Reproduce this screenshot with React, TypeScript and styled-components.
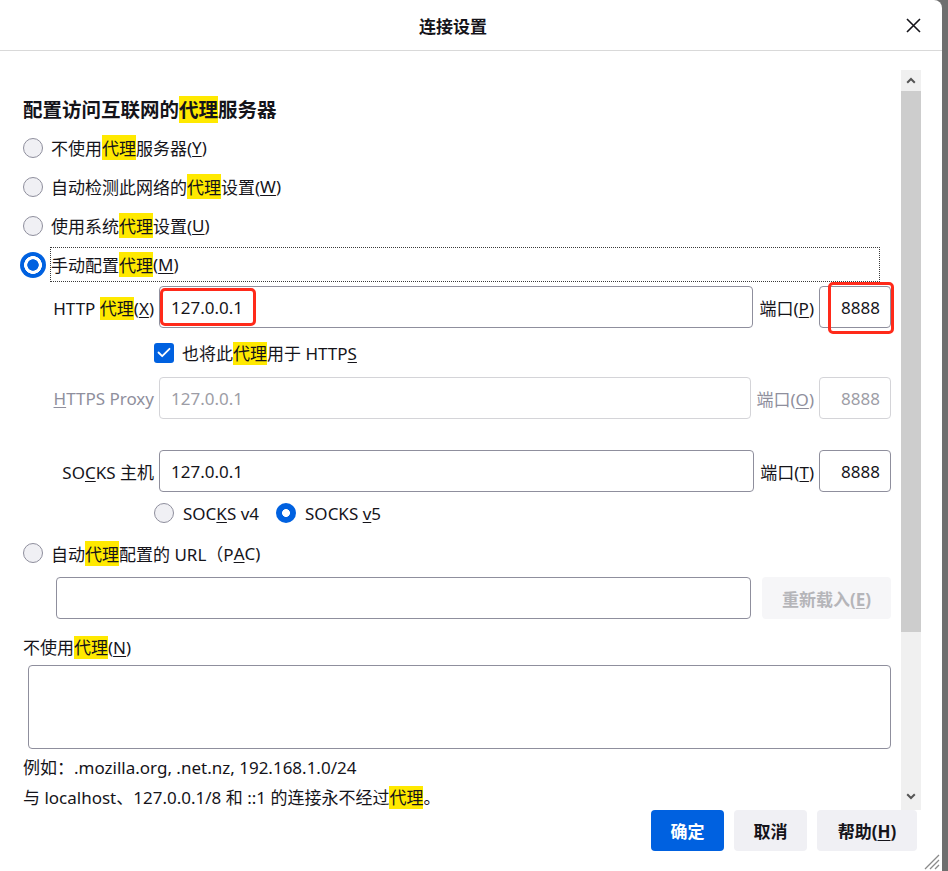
import React from "react";
import styled, { createGlobalStyle, css } from "styled-components";

const GlobalStyle = createGlobalStyle`
  html, body {
    margin: 0;
    padding: 0;
    background: #6f6f6f;
  }
  body {
    font-family: "Noto Sans", "Noto Sans CJK SC", sans-serif;
    color: #15141a;
    font-size: 17px;
  }
  u {
    text-underline-offset: 2px;
    text-decoration-thickness: 1px;
  }
`;

export default function App() {
    return (
        <Page>
            <GlobalStyle/>
            <Dialog>
                <Header>
                    <Title>连接设置</Title>
                    <CloseButton aria-label="关闭">
                        <svg width="15" height="15" viewBox="0 0 15 15">
                            <path d="M1 1 L14 14 M14 1 L1 14" stroke="#15141a" strokeWidth="1.6" fill="none"/>
                        </svg>
                    </CloseButton>
                </Header>

                <Body>
                    <Content>
                        <Heading>配置访问互联网的<Mark>代理</Mark>服务器</Heading>

                        <RadioList>
                            <RadioRow>
                                <RadioDot/>
                                <OptionLabel>不使用<Mark>代理</Mark>服务器(<u>Y</u>)</OptionLabel>
                            </RadioRow>
                            <RadioRow>
                                <RadioDot/>
                                <OptionLabel>自动检测此网络的<Mark>代理</Mark>设置(<u>W</u>)</OptionLabel>
                            </RadioRow>
                            <RadioRow>
                                <RadioDot/>
                                <OptionLabel>使用系统<Mark>代理</Mark>设置(<u>U</u>)</OptionLabel>
                            </RadioRow>
                            <RadioRow>
                                <RadioDot $checked $focus/>
                                <OptionLabel $focused>手动配置<Mark>代理</Mark>(<u>M</u>)</OptionLabel>
                            </RadioRow>
                        </RadioList>

                        <FieldRow $mt={2}>
                            <FieldLabel>HTTP <Mark>代理</Mark>(<u>X</u>)</FieldLabel>
                            <FieldBox $grow>
                                <TextInput readOnly value="127.0.0.1"/>
                                <Annotation $left={1} $top={2} $width={96} $height={38}/>
                            </FieldBox>
                            <PortLabel>端口(<u>P</u>)</PortLabel>
                            <FieldBox $width={72}>
                                <TextInput readOnly value="8888" $right/>
                                <Annotation $left={9} $top={-4} $width={66} $height={52}/>
                            </FieldBox>
                        </FieldRow>

                        <CheckRow>
                            <CheckBox>
                                <svg width="14" height="11" viewBox="0 0 14 11">
                                    <path d="M1.5 5.5 L5.2 9.2 L12.5 1.8" stroke="#fff" strokeWidth="1.8" fill="none"
                                          strokeLinecap="round" strokeLinejoin="round"/>
                                </svg>
                            </CheckBox>
                            <span>也将此<Mark>代理</Mark>用于 HTTP<u>S</u></span>
                        </CheckRow>

                        <FieldRow>
                            <FieldLabel $disabled><u>H</u>TTPS Proxy</FieldLabel>
                            <FieldBox $grow>
                                <TextInput readOnly disabled value="127.0.0.1"/>
                            </FieldBox>
                            <PortLabel $disabled>端口(<u>O</u>)</PortLabel>
                            <FieldBox $width={72}>
                                <TextInput readOnly disabled value="8888" $right/>
                            </FieldBox>
                        </FieldRow>

                        <FieldRow $mt={31}>
                            <FieldLabel>SO<u>C</u>KS 主机</FieldLabel>
                            <FieldBox $grow>
                                <TextInput readOnly value="127.0.0.1"/>
                            </FieldBox>
                            <PortLabel>端口(<u>T</u>)</PortLabel>
                            <FieldBox $width={72}>
                                <TextInput readOnly value="8888" $right/>
                            </FieldBox>
                        </FieldRow>

                        <VersionRow>
                            <RadioDot/>
                            <VersionLabel>SOC<u>K</u>S v4</VersionLabel>
                            <RadioDot $checked/>
                            <VersionLabel>SOCKS <u>v</u>5</VersionLabel>
                        </VersionRow>

                        <PacRow>
                            <RadioDot/>
                            <OptionLabel>自动<Mark>代理</Mark>配置的 URL（P<u>A</u>C)</OptionLabel>
                        </PacRow>

                        <PacFieldRow>
                            <FieldBox $grow>
                                <TextInput readOnly value=""/>
                            </FieldBox>
                            <ReloadButton disabled>重新载入(<u>E</u>)</ReloadButton>
                        </PacFieldRow>

                        <TextLine $mt={16}>不使用<Mark>代理</Mark>(<u>N</u>)</TextLine>
                        <NoProxyArea readOnly value=""/>
                        <TextLine $mt={6}>例如：.mozilla.org, .net.nz, 192.168.1.0/24</TextLine>
                        <TextLine $mt={4}>与 localhost、127.0.0.1/8 和 ::1 的连接永不经过<Mark>代理</Mark>。</TextLine>
                    </Content>

                    <ScrollBar>
                        <ScrollButton>
                            <svg width="10" height="7" viewBox="0 0 10 7">
                                <path d="M1.2 5.8 L5 2 L8.8 5.8" stroke="#555" strokeWidth="2" fill="none"/>
                            </svg>
                        </ScrollButton>
                        <Thumb/>
                        <Track/>
                        <ScrollButton $bottom>
                            <svg width="10" height="7" viewBox="0 0 10 7">
                                <path d="M1.2 1.2 L5 5 L8.8 1.2" stroke="#555" strokeWidth="2" fill="none"/>
                            </svg>
                        </ScrollButton>
                    </ScrollBar>
                </Body>

                <Footer>
                    <FooterButton $primary>确定</FooterButton>
                    <FooterButton>取消</FooterButton>
                    <FooterButton $wide>帮助(<u>H</u>)</FooterButton>
                </Footer>

                <Grip>
                    <svg width="18" height="18" viewBox="0 0 18 18">
                        <path d="M17 3 L3 17 M17 8 L8 17 M17 13 L13 17" stroke="#8a8a8a" strokeWidth="1.3"/>
                    </svg>
                </Grip>
            </Dialog>
        </Page>
    )
}

const Page = styled.div`
  display: flex;
  width: 948px;
  height: 871px;
  background: #6f6f6f;
  overflow: hidden;
`

const Dialog = styled.div`
  position: relative;
  display: flex;
  flex-direction: column;
  width: 942px;
  height: 871px;
  background: #fff;
  border-top-right-radius: 8px;
`

const Header = styled.div`
  display: flex;
  align-items: center;
  height: 50px;
  flex-shrink: 0;
  border-bottom: 1px solid #d9d9d9;
`

const Title = styled.div`
  flex: 1;
  text-align: center;
  font-size: 17px;
  font-weight: 700;
`

const CloseButton = styled.button`
  display: flex;
  width: 15px;
  height: 15px;
  margin-right: 21px;
  padding: 0;
  border: none;
  background: none;
`

const Body = styled.div`
  display: flex;
  height: 759px;
  flex-shrink: 0;
`

const Content = styled.div`
  width: 901px;
  box-sizing: border-box;
  padding: 46px 10px 0 23px;
  overflow: hidden;
`

const Mark = styled.span`
  background: #ffe900;
`

const Heading = styled.h2`
  margin: 0;
  font-size: 19.5px;
  font-weight: 700;
  line-height: 26px;
`

const RadioList = styled.div`
  display: flex;
  flex-direction: column;
  margin-top: 5px;
`

const RadioRow = styled.div`
  display: flex;
  align-items: center;
  gap: 7px;
  height: 39px;
`

const RadioDot = styled.span<{ $checked?: boolean; $focus?: boolean }>`
  flex-shrink: 0;
  width: 20px;
  height: 20px;
  box-sizing: border-box;
  border-radius: 50%;
  border: 1px solid #8f8f9d;
  background: #f0f0f4;
  ${p => p.$checked && css`
    border: none;
    background: radial-gradient(circle, #fff 0 3.6px, #0061e0 4.3px);
  `}
  ${p => p.$focus && css`
    width: 26px;
    height: 26px;
    margin: -3px;
    background: radial-gradient(circle, #0061e0 0 5.4px, #fff 6px 8.6px, #0061e0 9.2px);
  `}
`

const OptionLabel = styled.span<{ $focused?: boolean }>`
  display: flex;
  align-items: center;
  height: 35px;
  box-sizing: border-box;
  border: 1px dotted transparent;
  white-space: nowrap;
  ${p => p.$focused && css`
    flex: 1;
    margin-right: 11px;
    border-color: #3a3a3a;
  `}
`

const FieldRow = styled.div<{ $mt?: number }>`
  display: flex;
  align-items: center;
  height: 42px;
  margin-top: ${p => p.$mt ?? 0}px;
`

const FieldLabel = styled.label<{ $disabled?: boolean }>`
  flex-shrink: 0;
  width: 131px;
  margin-right: 5px;
  text-align: right;
  white-space: nowrap;
  color: ${p => p.$disabled ? "#8f8f9d" : "#15141a"};
`

const PortLabel = styled.label<{ $disabled?: boolean }>`
  flex-shrink: 0;
  margin: 0 5px 0 6px;
  white-space: nowrap;
  color: ${p => p.$disabled ? "#8f8f9d" : "#15141a"};
`

const FieldBox = styled.div<{ $grow?: boolean; $width?: number }>`
  position: relative;
  display: flex;
  height: 42px;
  ${p => p.$grow ? css`flex: 1;` : css`width: ${p.$width}px; flex-shrink: 0;`}
`

const TextInput = styled.input<{ $right?: boolean }>`
  width: 100%;
  height: 100%;
  box-sizing: border-box;
  margin: 0;
  padding: 0 10px 0 11px;
  border: 1px solid #8f8f9d;
  border-radius: 4px;
  background: #fff;
  font: inherit;
  font-size: 17px;
  color: #15141a;
  text-align: ${p => p.$right ? "right" : "left"};
  outline: none;

  &:disabled {
    border-color: #d4d4d8;
    color: #9d9da6;
    background: #fff;
  }
`

const Annotation = styled.span<{ $left: number; $top: number; $width: number; $height: number }>`
  position: absolute;
  left: ${p => p.$left}px;
  top: ${p => p.$top}px;
  width: ${p => p.$width}px;
  height: ${p => p.$height}px;
  box-sizing: border-box;
  border: 3px solid #ff2a1a;
  border-radius: 5px;
  pointer-events: none;
`

const CheckRow = styled.div`
  display: flex;
  align-items: center;
  gap: 8px;
  height: 49px;
  padding-left: 131px;
`

const CheckBox = styled.span`
  display: flex;
  align-items: center;
  justify-content: center;
  width: 20px;
  height: 20px;
  border-radius: 3px;
  background: #0061e0;
`

const VersionRow = styled.div`
  display: flex;
  align-items: center;
  height: 42px;
  padding-left: 131px;
`

const VersionLabel = styled.span`
  margin: 0 17px 0 9px;
  white-space: nowrap;
`

const PacRow = styled.div`
  display: flex;
  align-items: center;
  gap: 7px;
  height: 38px;
`

const PacFieldRow = styled.div`
  display: flex;
  align-items: center;
  gap: 11px;
  margin-top: 5px;
  padding-left: 33px;
`

const ReloadButton = styled.button`
  width: 129px;
  height: 42px;
  flex-shrink: 0;
  border: none;
  border-radius: 4px;
  background: #f6f6f8;
  font: inherit;
  font-size: 17px;
  font-weight: 700;
  color: #b5b5b9;
`

const TextLine = styled.div<{ $mt: number }>`
  margin-top: ${p => p.$mt}px;
  line-height: 26px;
  white-space: nowrap;
`

const NoProxyArea = styled.textarea`
  display: block;
  width: calc(100% - 5px);
  height: 84px;
  box-sizing: border-box;
  margin: 4px 0 0 5px;
  border: 1px solid #8f8f9d;
  border-radius: 4px;
  resize: none;
  font: inherit;
  outline: none;
`

const ScrollBar = styled.div`
  display: flex;
  flex-direction: column;
  width: 20px;
  height: 740px;
  margin-top: 19px;
  background: #f0f0f0;
`

const ScrollButton = styled.div<{ $bottom?: boolean }>`
  display: flex;
  align-items: center;
  justify-content: center;
  height: 21px;
  flex-shrink: 0;
  margin-bottom: ${p => p.$bottom ? 3 : 0}px;
`

const Thumb = styled.div`
  height: 541px;
  background: #cdcdcd;
`

const Track = styled.div`
  flex: 1;
`

const Footer = styled.div`
  display: flex;
  justify-content: flex-end;
  align-items: flex-start;
  gap: 10px;
  flex: 1;
  padding-right: 25px;
`

const FooterButton = styled.button<{ $primary?: boolean; $wide?: boolean }>`
  width: ${p => p.$wide ? 100 : 73}px;
  height: 41px;
  border: none;
  border-radius: 4px;
  background: ${p => p.$primary ? "#0061e0" : "#f0f0f4"};
  color: ${p => p.$primary ? "#fff" : "#15141a"};
  font: inherit;
  font-size: 17px;
  font-weight: 700;
`

const Grip = styled.div`
  position: absolute;
  right: 2px;
  bottom: 1px;
  display: flex;
`
